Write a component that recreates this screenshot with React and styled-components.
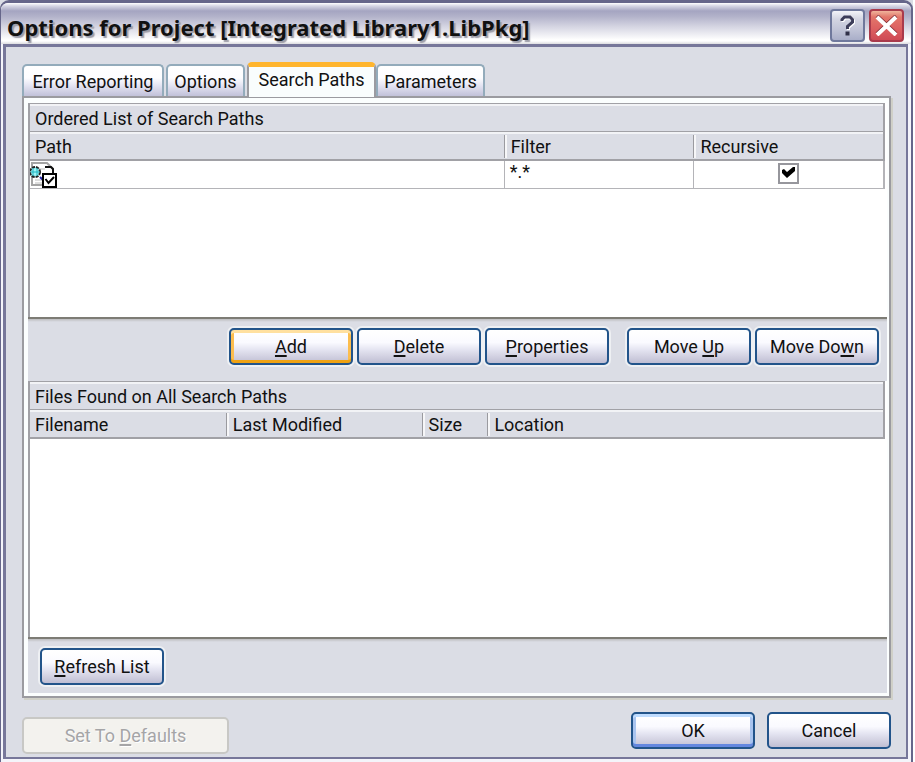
import React, { useState } from "react";
import styled, { createGlobalStyle, css } from "styled-components";

const GlobalStyle = createGlobalStyle`
  * { box-sizing: border-box; }
  html, body { margin: 0; background: #fff; }
  body { padding-right: 2px; font-family: Roboto, "Liberation Sans", sans-serif; font-size: 18px; line-height: 24px; color: #111; }
  button, input { font: inherit; color: inherit; margin: 0; }
`;

const Backdrop = styled.div`
  min-height: 100vh;
  display: flex;
  background: #dbdde5;
`;

const Dialog = styled.main`
  flex: 1;
  min-width: 0;
  display: flex;
  flex-direction: column;
  border: solid #66668a;
  border-width: 3px 2px 0 1px;
  border-radius: 9px 9px 0 0;
  background: #f4f4fa;
`;

const TitleBar = styled.header`
  height: 41px;
  flex: none;
  display: flex;
  align-items: center;
  justify-content: space-between;
  padding: 6px 7px 0 6px;
  border-radius: 7px 7px 0 0;
  background: linear-gradient(#fff 0, #d5d5e4 3px, #a5a5c1 8px, #b4b4cb 14px, #d6d6e3 24px, #fff 37px, #fff 38px, #dcdce0 41px);
`;

const Title = styled.h1`
  margin: 0;
  font: bold 22px/24px "Noto Sans", "Open Sans", sans-serif;
  white-space: nowrap;
  text-shadow: 2px 2px 1px #9d9da8;
`;

const CaptionButtons = styled.div`
  display: flex;
  align-self: flex-start;
  gap: 4px;
`;

const CaptionButton = styled.button`
  width: 35px;
  height: 33px;
  padding: 0;
  display: grid;
  place-items: center;
  border: 2px solid ${(p) => (p.$close ? "#a93a4b" : "#6f789c")};
  border-radius: 4px;
  background: ${(p) =>
    p.$close
      ? "linear-gradient(#f0b49b 0, #e2766a 6px, #dc5f60 18px, #cf4a55)"
      : "linear-gradient(#f2f3f8 0, #d3d5e2 8px, #c2c5d8 18px, #a9aec8)"};
`;

const Body = styled.div`
  flex: 1;
  display: flex;
  flex-direction: column;
  margin: 0 3px 3px 2px;
  padding: 15px 15px 3px 16px;
  border: 2px solid #77779a;
  border-width: 3px 2px 2px 3px;
  background: #dbdde5;
`;

const Tabs = styled.div`
  display: flex;
  align-items: flex-end;
  height: 35px;
  flex: none;
  margin-bottom: -1px;
  position: relative;
`;

const Tab = styled.button`
  height: 32px;
  margin: 0 2px 1px 0;
  padding: 2px 0 0;
  width: ${(p) => p.$width}px;
  white-space: nowrap;
  border: 2px solid #93abbb;
  border-bottom: 0;
  border-radius: 5px 5px 0 0;
  background: linear-gradient(#fff 0, #fdfdff 40%, #e4e4f2 65%, #c1c1d9);
  ${(p) =>
    p.$active &&
    css`
      height: 35px;
      margin: 0;
      padding: 0 0 4px;
      border-color: #9b9ba1;
      border-top: 5px solid #ffb52d;
      background: #f9fdfd;
    `}
`;

const Panel = styled.section`
  flex: 1;
  display: flex;
  flex-direction: column;
  padding: 5px 2px 3px 4px;
  border: 2px solid #9b9ba0;
  background: #fbfefe;
  box-shadow: 2px 2px 0 #d0d0c8;
`;

const List = styled.div`
  display: flex;
  flex-direction: column;
  padding-right: 2px;
  border-left: 2px solid #a1a1a6;
  background: #fff;
  min-height: ${(p) => p.$height}px;
  flex: ${(p) => (p.$grow ? "1 0 auto" : "none")};
`;

const Table = styled.table`
  width: 100%;
  table-layout: fixed;
  border-collapse: separate;
  border-spacing: 0;
  text-align: left;
`;

const Band = css`
  background: #dbdde5;
  border: solid #a1a1a6;
  border-width: 1px 2px 1px 0;
  box-shadow: inset 0 2px 0 #f2f3f6;
`;

const Caption = styled.caption`
  ${Band}
  height: 29px;
  padding: 3px 0 0 5px;
  text-align: left;
  white-space: nowrap;
`;

const Head = styled.th`
  height: 28px;
  padding: 3px 0 1px;
  font-weight: normal;
  white-space: nowrap;
  background: #dbdde5;
  border-bottom: 2px solid #a1a1a6;
  box-shadow: inset 0 2px 0 #f2f3f6;
  &:last-child { border-right: 2px solid #a1a1a6; }
`;

const HeadLabel = styled.span`
  display: block;
  height: 23px;
  padding-left: 5px;
  th + th > & {
    padding-left: 6px;
    border-left: 1px solid #9a9a9f;
    box-shadow: inset 2px 0 0 #f6f6f8;
  }
`;

const Cell = styled.td`
  height: 28px;
  padding: 1px 0 0 ${(p) => (p.$indent ? 5 : 0)}px;
  line-height: 20px;
  vertical-align: top;
  text-align: ${(p) => (p.$center ? "center" : "left")};
  border-bottom: 1px solid #b4b4b8;
  & + & { border-left: 1px solid #b4b4b8; }
  &:last-child { border-right: 2px solid #b4b4b8; }
  svg { display: block; }
`;

const Check = styled.label`
  display: inline-grid;
  width: 21px;
  height: 21px;
  vertical-align: top;
  margin-top: 1px;
  > * { grid-area: 1 / 1; }
  svg { pointer-events: none; place-self: center; }
  input:not(:checked) + svg { visibility: hidden; }
`;

const CheckInput = styled.input`
  appearance: none;
  width: 21px;
  height: 21px;
  border: 2px solid #96969c;
  background: #fff;
`;

const Bar = styled.div`
  flex: none;
  display: flex;
  gap: 4px;
  justify-content: ${(p) => (p.$start ? "flex-start" : "flex-end")};
  height: ${(p) => (p.$start ? 56 : 64)}px;
  padding: 9px ${(p) => (p.$start ? 0 : 8)}px 0 12px;
  border-top: 2px solid #7d7c75;
  background: linear-gradient(#bdbdbf 0, #dbdde5 3px);
`;

const Separator = styled.span`
  width: 10px;
`;

const Button = styled.button`
  flex: none;
  width: 124px;
  height: 37px;
  padding: 0;
  white-space: nowrap;
  border: 2px solid #22548a;
  border-radius: 5px;
  background: linear-gradient(#fff 0, #fafaff 38%, #e4e4f1 60%, #d4d3e3 78%, #bfbed3);
  box-shadow: ${(p) => (p.$flat ? "none" : "0 0 0 2px #eef0f3")};
  ${(p) => p.$kind === "hot" && css`
    border-color: #22548a;
    box-shadow: 0 0 0 2px #eef0f3, inset 0 -3px 0 #efa213, inset 0 3px 0 #ffe0a0, inset 3px 0 0 #fcbd4e, inset -3px 0 0 #fcbd4e;
  `}
  ${(p) => p.$kind === "default" && css`
    box-shadow: inset 0 -3px 0 #6487df, inset 0 3px 0 #bfdcff, inset 3px 0 0 #a9c4ef, inset -3px 0 0 #a9c4ef;
  `}
  &:disabled {
    width: 207px;
    color: #a5a5a7;
    text-shadow: 1px 1px 0 #fff;
    border-color: #c8c8c5;
    background: #f3f2ee;
    box-shadow: none;
  }
`;

const Key = styled.span`
  text-decoration: underline;
  text-decoration-thickness: 2px;
  text-underline-offset: 2px;
  text-decoration-skip-ink: none;
`;

const Footer = styled.footer`
  flex: none;
  display: flex;
  align-items: flex-start;
  gap: 12px;
  padding-top: 14px;
`;

const Defaults = styled.div`
  flex: 1;
  padding-top: 5px;
`;

const HelpIcon = () => (
  <svg width="17" height="21" viewBox="0 0 17 21" fill="none" aria-hidden="true">
    <path d="M3 6V4.500L5.500 2H11L13.500 4.500V7L8.500 11.500V14" stroke="#fff" strokeWidth="3" transform="translate(1 1)" />
    <path d="M3 6V4.500L5.500 2H11L13.500 4.500V7L8.500 11.500V14" stroke="#3c3d59" strokeWidth="3" />
    <path d="M6.500 16.500h4v4h-4z" fill="#303048" />
  </svg>
);

const CloseIcon = () => (
  <svg width="23" height="21" viewBox="0 0 23 21" fill="none" aria-hidden="true">
    <path d="M2 1L21 19M21 1L2 19" stroke="#7b2630" strokeWidth="4" />
    <path d="M2 2L21 20M21 2L2 20" stroke="#fff" strokeWidth="4" />
  </svg>
);

const PathIcon = () => (
  <svg width="28" height="26" viewBox="0 0 28 26" fill="none" aria-hidden="true">
    <path d="M2 1H17L23 7V23H2Z" fill="#fff" stroke="#a4a4a4" strokeWidth="2" />
    <path d="M15 5H21L23 7V12" stroke="#111" strokeWidth="2" />
    <path d="M5 18H13M5 21H13M9 7H15" stroke="#bcbcbc" />
    <circle cx="5" cy="10" r="5" fill="#9df3f5" stroke="#222" strokeWidth="2" strokeDasharray="3 1" />
    <path d="M3 6V14M7 6V14M1 10H10" stroke="#21b5c1" />
    <path d="M10 15L13 18" stroke="#2323a8" strokeWidth="2" />
    <rect x="13" y="12" width="13" height="13" fill="#fff" stroke="#000" strokeWidth="2" />
    <path d="M15.500 17L18.500 21L24 15" stroke="#000" strokeWidth="2" />
  </svg>
);

const TickIcon = () => (
  <svg width="13" height="13" viewBox="0 0 13 13" aria-hidden="true">
    <path d="M0 3L2 2L5 5L11 0L13 0V4L5 11L0 6Z" fill="#000" />
  </svg>
);

const tabs = [
  { name: "Error Reporting", width: 142 },
  { name: "Options", width: 79 },
  { name: "Search Paths", width: 129 },
  { name: "Parameters", width: 109 },
];

export default function App() {
  const [active, setActive] = useState("Search Paths");
  return (
    <>
      <GlobalStyle />
      <Backdrop>
        <Dialog>
          <TitleBar>
            <Title>Options for Project [Integrated Library1.LibPkg]</Title>
            <CaptionButtons>
              <CaptionButton type="button" aria-label="Help"><HelpIcon /></CaptionButton>
              <CaptionButton type="button" aria-label="Close" $close><CloseIcon /></CaptionButton>
            </CaptionButtons>
          </TitleBar>
          <Body>
            <Tabs role="tablist">
              {tabs.map((t) => (
                <Tab key={t.name} type="button" role="tab" aria-selected={active === t.name}
                  $active={active === t.name} $width={t.width} onClick={() => setActive(t.name)}>
                  {t.name}
                </Tab>
              ))}
            </Tabs>
            <Panel role="tabpanel">
              <List $height={214}>
                <Table>
                  <Caption>Ordered List of Search Paths</Caption>
                  <colgroup><col width="55.4%" /><col width="22.2%" /><col width="22.4%" /></colgroup>
                  <thead>
                    <tr>
                      <Head><HeadLabel>Path</HeadLabel></Head>
                      <Head><HeadLabel>Filter</HeadLabel></Head>
                      <Head><HeadLabel>Recursive</HeadLabel></Head>
                    </tr>
                  </thead>
                  <tbody>
                    <tr>
                      <Cell><PathIcon /></Cell>
                      <Cell $indent>*.*</Cell>
                      <Cell $center>
                        <Check>
                          <CheckInput type="checkbox" aria-label="Recursive" defaultChecked />
                          <TickIcon />
                        </Check>
                      </Cell>
                    </tr>
                  </tbody>
                </Table>
              </List>
              <Bar>
                <Button type="button" $kind="hot"><Key>A</Key>dd</Button>
                <Button type="button"><Key>D</Key>elete</Button>
                <Button type="button"><Key>P</Key>roperties</Button>
                <Separator />
                <Button type="button">Move <Key>U</Key>p</Button>
                <Button type="button">Move Do<Key>w</Key>n</Button>
              </Bar>
              <List $height={180} $grow>
                <Table>
                  <Caption>Files Found on All Search Paths</Caption>
                  <colgroup><col width="22.9%" /><col width="22.9%" /><col width="7.7%" /><col width="46.5%" /></colgroup>
                  <thead>
                    <tr>
                      <Head><HeadLabel>Filename</HeadLabel></Head>
                      <Head><HeadLabel>Last Modified</HeadLabel></Head>
                      <Head><HeadLabel>Size</HeadLabel></Head>
                      <Head><HeadLabel>Location</HeadLabel></Head>
                    </tr>
                  </thead>
                </Table>
              </List>
              <Bar $start>
                <Button type="button"><Key>R</Key>efresh List</Button>
              </Bar>
            </Panel>
            <Footer>
              <Defaults><Button type="button" disabled>Set To <Key>D</Key>efaults</Button></Defaults>
              <Button type="button" $flat $kind="default">OK</Button>
              <Button type="button" $flat>Cancel</Button>
            </Footer>
          </Body>
        </Dialog>
      </Backdrop>
    </>
  );
}
